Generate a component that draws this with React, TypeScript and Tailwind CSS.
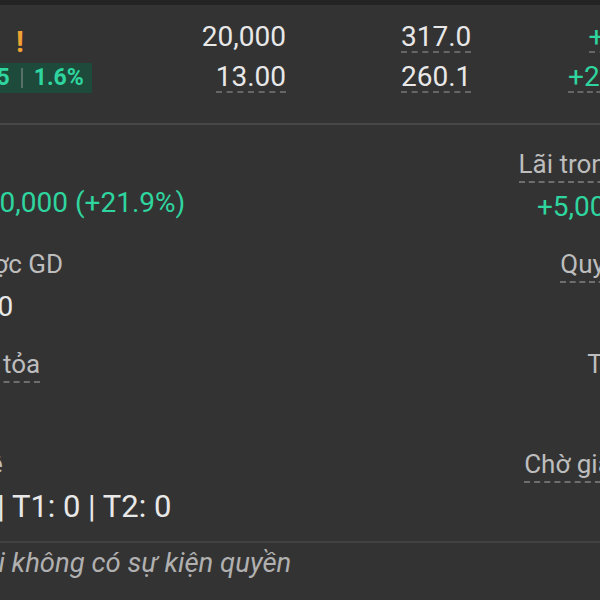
import React from "react";

const groups = [
  {
    leftLabel: "Lãi/lỗ",
    leftLabelCls: "",
    leftLine: false,
    leftValue: "+1,140,000 (+21.9%)",
    leftValueCls: "ml-[7px] mt-[4px] text-[28px] text-[#2fd59f]",
    rightLabel: "Lãi trong ngày",
    rightLine: true,
    rightValue: "+5,000,000",
    rightValueCls: "mr-[8px] mt-[8px] text-[#2fd59f]",
  },
  {
    leftLabel: "KL được GD",
    leftLabelCls: "ml-[1px]",
    leftLine: false,
    leftValue: "20,000",
    leftValueCls: "ml-[5px] mt-[8px] text-[28px] text-[#e8e8e8]",
    rightLabel: "Quyền chờ",
    rightLine: true,
    rightValue: "0",
    rightValueCls: "mt-[8px] text-[#e8e8e8]",
  },
  {
    leftLabel: "Phong tỏa",
    leftLabelCls: "-ml-[2px]",
    leftLine: true,
    leftValue: "0",
    leftValueCls: "mt-[8px] text-[28px] text-[#e8e8e8]",
    rightLabel: "Tổng KL",
    rightLine: false,
    rightValue: "0",
    rightValueCls: "mt-[8px] text-[#e8e8e8]",
  },
  {
    leftLabel: "Chờ về",
    leftLabelCls: "",
    leftLine: false,
    leftValue: "T0: 0 | T1: 0 | T2: 0",
    leftValueCls: "-ml-[3px] mt-[8px] text-[31px] text-[#e8e8e8]",
    rightLabel: "Chờ giao dịch",
    rightLine: true,
    rightValue: "0",
    rightValueCls: "mt-[8px] text-[#e8e8e8]",
  },
];

function Label({ text, line, cls = "" }: { text: string; line: boolean; cls?: string }) {
  return (
    <span
      className={`inline-block whitespace-nowrap text-[26px] leading-[30px] pb-[2px] border-b-2 border-dashed text-[#bdbdbd] ${
        line ? "border-[#6e6e6e]" : "border-transparent"
      } ${cls}`}
    >
      {text}
    </span>
  );
}

function Num({ text, line, cls = "" }: { text: string; line: boolean; cls?: string }) {
  return (
    <span
      className={`inline-block whitespace-nowrap text-[28px] leading-[28px] border-b-2 border-dashed ${
        line ? "border-[#666666]" : "border-transparent"
      } ${cls}`}
    >
      {text}
    </span>
  );
}

export default function App() {
  return (
    <div className="w-[600px] h-[600px] overflow-hidden bg-[#333333] font-['Roboto',sans-serif]">
      <div className="h-[5px] bg-[#242424]" />

      {/* Holding rows */}
      <div className="pt-[13px] -ml-[76px] w-[735px]">
        <div className="flex items-center h-[40px]">
          <div className="w-[176px] flex items-center">
            <span className="w-[92px] text-[28px] font-bold text-[#e8e8e8]">HPG</span>
            <span className="mt-[8px] text-[29px] leading-[28px] font-bold text-[#f0a232]">!</span>
          </div>
          <div className="w-[186px] text-right">
            <Num text="20,000" line={false} cls="text-[#e8e8e8]" />
          </div>
          <div className="ml-[115px] w-[120px]">
            <Num text="317.0" line cls="text-[#e8e8e8]" />
          </div>
          <div className="w-[138px] text-right">
            <Num text="+56.9" line cls="text-[#2fd59f]" />
          </div>
        </div>
        <div className="flex items-center h-[40px]">
          <div className="w-[176px] flex items-center">
            <div className="ml-[52px] h-[30px] flex items-center gap-[11px] px-[8px] bg-[#1d4a3b] text-[23px] font-bold text-[#2fd59f]">
              <span>+5</span>
              <span className="w-[2px] h-[20px] bg-[#587066]" />
              <span>1.6%</span>
            </div>
          </div>
          <div className="w-[186px] text-right">
            <Num text="13.00" line cls="text-[#e8e8e8]" />
          </div>
          <div className="ml-[115px] w-[120px]">
            <Num text="260.1" line cls="text-[#e8e8e8]" />
          </div>
          <div className="w-[138px] text-right">
            <Num text="+21.9%" line cls="text-[#2fd59f]" />
          </div>
        </div>
      </div>

      <div className="mt-[25px] h-[2px] bg-[#474747]" />

      {/* Summary */}
      <div className="pt-[24px] -ml-[76px] w-[758px] flex flex-col gap-[26px]">
        {groups.map((g, i) => (
          <div key={i} className="flex justify-between">
            <div className="flex flex-col items-start">
              <Label text={g.leftLabel} line={g.leftLine} cls={g.leftLabelCls} />
              <span className={`whitespace-nowrap leading-[32px] ${g.leftValueCls}`}>{g.leftValue}</span>
            </div>
            <div className="flex flex-col items-end">
              <Label text={g.rightLabel} line={g.rightLine} />
              <span className={`whitespace-nowrap text-[28px] leading-[32px] ${g.rightValueCls}`}>
                {g.rightValue}
              </span>
            </div>
          </div>
        ))}
      </div>

      <div className="mt-[18px] h-[2px] bg-[#424242]" />
      <p className="-ml-[86px] pt-[5px] whitespace-nowrap italic text-[27.5px] leading-[30px] text-[#b0b0b0]">
        Hiện tại không có sự kiện quyền
      </p>
    </div>
  );
}
